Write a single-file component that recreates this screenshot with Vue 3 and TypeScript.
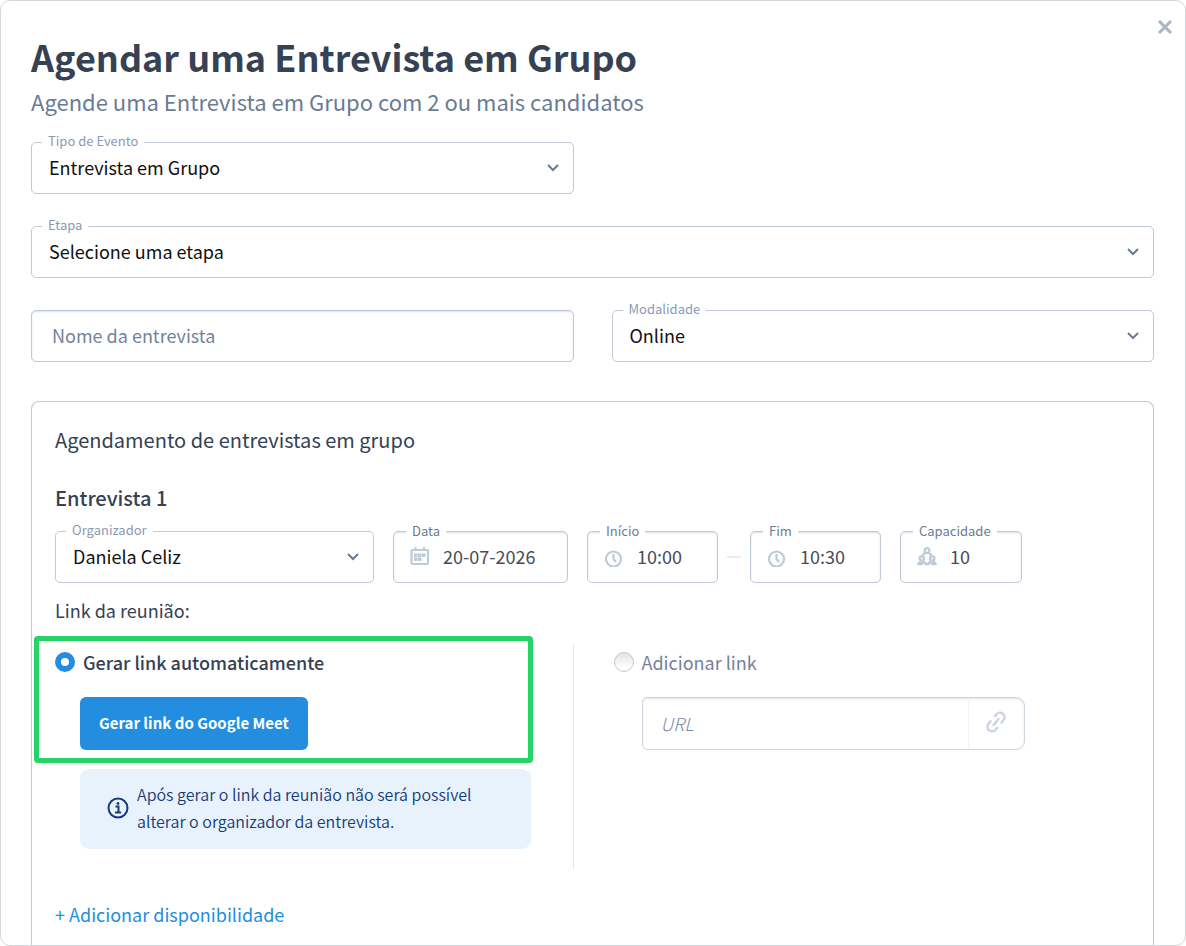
<script setup lang="ts">
import { ref } from 'vue'

const eventType = ref('Entrevista em Grupo')
const stage = ref('Selecione uma etapa')
const interviewName = ref('')
const modality = ref('Online')
const organizer = ref('Daniela Celiz')
const date = ref('20-07-2026')
const startTime = ref('10:00')
const endTime = ref('10:30')
const capacity = ref('10')
const linkMode = ref<'auto' | 'manual'>('auto')
const url = ref('')
</script>

<template>
  <main class="dialog">
    <button class="close" type="button" aria-label="Fechar">
      <svg width="18" height="18" viewBox="0 0 18 18"><path d="M3 3 15 15M15 3 3 15" /></svg>
    </button>

    <header class="header">
      <h1>Agendar uma Entrevista em Grupo</h1>
      <p>Agende uma Entrevista em Grupo com 2 ou mais candidatos</p>
    </header>

    <form class="form" @submit.prevent>
      <div class="fields">
        <div class="field">
          <label for="type">Tipo de Evento</label>
          <select id="type" v-model="eventType"><option>Entrevista em Grupo</option></select>
          <svg class="chevron" width="12" height="8" viewBox="0 0 12 8"><path d="M1 1 6 6 11 1" /></svg>
        </div>
        <div class="field wide">
          <label for="stage">Etapa</label>
          <select id="stage" v-model="stage"><option>Selecione uma etapa</option></select>
          <svg class="chevron" width="12" height="8" viewBox="0 0 12 8"><path d="M1 1 6 6 11 1" /></svg>
        </div>
        <div class="field inset">
          <input id="name" v-model="interviewName" type="text" aria-label="Nome da entrevista" placeholder="Nome da entrevista" />
        </div>
        <div class="field">
          <label for="modality">Modalidade</label>
          <select id="modality" v-model="modality"><option>Online</option></select>
          <svg class="chevron" width="12" height="8" viewBox="0 0 12 8"><path d="M1 1 6 6 11 1" /></svg>
        </div>
      </div>

      <section class="panel">
        <h2>Agendamento de entrevistas em grupo</h2>
        <h3>Entrevista 1</h3>

        <div class="slots">
          <div class="field organizer">
            <label for="organizer">Organizador</label>
            <select id="organizer" v-model="organizer"><option>Daniela Celiz</option></select>
            <svg class="chevron" width="12" height="8" viewBox="0 0 12 8"><path d="M1 1 6 6 11 1" /></svg>
          </div>
          <div class="field inset slot date">
            <label for="date">Data</label>
            <svg class="icon" width="20" height="20" viewBox="0 0 20 20">
              <rect class="line" x="1.500" y="3" width="16.500" height="14" rx="1" />
              <path class="solid" d="M4.500 0h2v4h-2zM13 0h2v4h-2zM4 6.500h3.500V10H4zM8 6.500h3.500V10H8zM12 6.500h3.500V10H12zM4 10.500h3.500V14H4zM8 10.500h3.500V14H8z" />
            </svg>
            <input id="date" v-model="date" type="text" />
          </div>
          <div class="field inset slot time">
            <label for="start">Início</label>
            <svg class="icon" width="20" height="20" viewBox="0 0 20 20">
              <circle class="line" cx="9.500" cy="12" r="7.500" /><path class="line" d="M9.500 7v5l2.500 3" />
            </svg>
            <input id="start" v-model="startTime" type="text" />
          </div>
          <span class="dash"></span>
          <div class="field inset slot time">
            <label for="end">Fim</label>
            <svg class="icon" width="20" height="20" viewBox="0 0 20 20">
              <circle class="line" cx="9.500" cy="12" r="7.500" /><path class="line" d="M9.500 7v5l2.500 3" />
            </svg>
            <input id="end" v-model="endTime" type="text" />
          </div>
          <div class="field inset slot capacity">
            <label for="capacity">Capacidade</label>
            <svg class="icon" width="20" height="20" viewBox="0 0 20 20">
              <g class="line">
                <circle cx="10" cy="3.500" r="2.400" /><circle cx="4.800" cy="11.500" r="2.200" /><circle cx="15.200" cy="11.500" r="2.200" />
                <path d="M5.200 8.800C5.700 7.700 6.800 6.800 8.300 5.800M14.800 8.800C14.300 7.700 13.200 6.800 11.700 5.800" />
              </g>
              <path class="solid" d="M0 18.200c.3-2 1.300-3.500 2.800-4.200l2 1.300 2-1.300c1.500.4 2.500 1.200 3.200 2.400.7-1.200 1.700-2 3.200-2.400l2 1.300 2-1.300c1.500.7 2.500 2.200 2.800 4.200h-5l-1.600-1.700-1.500 1.700H8.100l-1.500-1.700L5 18.200z" />
            </svg>
            <input id="capacity" v-model="capacity" type="text" />
          </div>
        </div>

        <p class="link-title">Link da reunião:</p>

        <div class="options">
          <div class="option automatic">
            <div class="highlight">
              <label class="radio"><input v-model="linkMode" type="radio" name="link" value="auto" /><span>Gerar link automaticamente</span></label>
              <button class="primary" type="button">Gerar link do Google Meet</button>
            </div>
            <div class="notice">
              <svg width="22" height="22" viewBox="0 0 22 22">
                <circle cx="11" cy="11" r="9.500" /><path d="M8.500 9.500h3v6M8 15.500h6" /><circle class="dot" cx="11" cy="6.500" r="1.400" />
              </svg>
              <p>Após gerar o link da reunião não será possível alterar o organizador da entrevista.</p>
            </div>
          </div>
          <div class="option manual">
            <label class="radio"><input v-model="linkMode" type="radio" name="link" value="manual" /><span>Adicionar link</span></label>
            <div class="url">
              <input v-model="url" type="text" aria-label="URL" placeholder="URL" />
              <span class="addon">
                <svg width="24" height="24" viewBox="0 0 24 24">
                  <path d="M11 6 12.800 3.900a4.600 4.600 0 0 1 6.900 6L17.500 12.700M13 18 11.200 20.100a4.600 4.600 0 0 1-6.900-6L6.500 11.300M9.500 15 14.500 9" />
                </svg>
              </span>
            </div>
          </div>
        </div>

        <button class="add" type="button">+ Adicionar disponibilidade</button>
      </section>
    </form>
  </main>
</template>

<style>
body {
  background: #fff;
}
</style>

<style scoped>
* {
  box-sizing: border-box;
}

.dialog {
  position: relative;
  display: flex;
  flex-direction: column;
  min-height: 100vh;
  padding: 32px 31px 0 30px;
  border: 1px solid #d5d7d9;
  border-radius: 10px;
  background: #fff;
  color: #364154;
  font-family: "Noto Sans CJK SC", "Noto Sans CJK JP", sans-serif;
  font-size: 18px;
  line-height: 26px;
}

h1, h2, h3, p {
  margin: 0;
}

button, input, select {
  font: inherit;
}

svg {
  fill: none;
}

.close {
  position: absolute;
  top: 17px;
  right: 11px;
  display: flex;
  padding: 0;
  border: 0;
  background: none;
}

.close path {
  stroke: #acb5c3;
  stroke-width: 3;
}

h1 {
  font-size: 36px;
  line-height: 46px;
}

.header p {
  color: #6b7b93;
  font-size: 22px;
  line-height: 44px;
}

.form {
  display: flex;
  flex: 1;
  flex-direction: column;
  padding-top: 19px;
}

.fields {
  display: grid;
  grid-template-columns: 1fr 1fr;
  gap: 32px 38px;
}

.wide {
  grid-column: 1 / -1;
}

.field {
  position: relative;
  display: flex;
  height: 52px;
  border: 1px solid #c0c9d6;
  border-radius: 5px;
}

.inset, .url {
  box-shadow: inset 0 1px 2px #dde1e8;
}

.field label {
  position: absolute;
  top: -12px;
  left: 10px;
  padding: 0 6px;
  background: #fff;
  color: #8a9ab3;
  font-size: 13px;
  line-height: 20px;
}

.field select, .field input {
  width: 100%;
  min-width: 0;
  padding: 0 40px 2px 17px;
  border: 0;
  outline: 0;
  background: none;
  color: #111;
  appearance: none;
}

.field input {
  padding: 0 0 2px 20px;
  color: #464d59;
}

.field input::placeholder {
  color: #74829a;
  opacity: 1;
}

.chevron {
  position: absolute;
  top: 21px;
  right: 14px;
  pointer-events: none;
}

.chevron path {
  stroke: #6b7b93;
  stroke-width: 2;
}

.panel {
  flex: 1;
  margin-top: 39px;
  padding: 25px 23px 16px;
  border: 1px solid #c0c9d6;
  border-bottom: 0;
  border-radius: 8px 8px 0 0;
}

h2 {
  font-size: 20px;
  font-weight: 400;
}

h3 {
  margin-top: 32px;
  font-size: 20px;
  font-weight: 500;
}

.slots {
  display: flex;
  align-items: center;
  gap: 19px;
  margin-top: 20px;
}

.organizer {
  width: 319px;
}

.slot {
  align-items: center;
  padding-left: 16px;
}

.slot label {
  top: -11px;
  left: 12px;
  color: #6b7b93;
}

.field.slot input {
  padding-left: 13px;
}

.icon {
  flex: none;
}

.line {
  stroke: #c0c9d6;
  stroke-width: 2.2;
}

.solid {
  fill: #c0c9d6;
}

.date {
  width: 175px;
}

.time {
  width: 131px;
}

.capacity {
  width: 122px;
}

.dash {
  width: 14px;
  height: 2px;
  margin: 0 -10px;
  background: #e8ecf0;
}

.link-title {
  margin-top: 14px;
}

.options {
  display: grid;
  grid-template-columns: 519fr 557fr;
  margin-top: 22px;
}

.automatic {
  padding-bottom: 20px;
  border-right: 1px solid #e4e8ec;
}

.highlight {
  margin: -9px 40px 0 -21px;
  padding: 8px 0 8px 16px;
  border: 5px solid #25d366;
  border-radius: 4px;
}

.radio {
  display: flex;
  align-items: center;
  gap: 8px;
}

.radio input {
  width: 20px;
  height: 20px;
  margin: 0;
  border: 1px solid #c0c9d6;
  border-radius: 50%;
  background: linear-gradient(#e0e2e4, #fff 80%);
  appearance: none;
}

.radio input:checked {
  border: 6px solid #238ee0;
  background: #fff;
}

.automatic .radio {
  font-weight: 500;
}

.primary {
  height: 53px;
  margin: 22px 0 0 25px;
  padding: 0 19px 2px;
  border: 0;
  border-radius: 6px;
  background: #238ee0;
  color: #fff;
  font-size: 15px;
  font-weight: 700;
}

.notice {
  display: flex;
  align-items: center;
  gap: 8px;
  margin: 6px 42px 0 25px;
  padding: 12px 50px 14px 27px;
  border-radius: 9px;
  background: #e8f2fc;
  color: #163a7a;
  font-size: 16px;
  font-weight: 350;
  line-height: 27px;
}

.notice svg {
  flex: none;
  stroke: #163a7a;
  stroke-width: 2;
}

.notice .dot {
  fill: #163a7a;
  stroke: none;
}

.manual {
  padding: 4px 0 0 40px;
  color: #74829a;
}

.url {
  display: flex;
  max-width: 383px;
  height: 53px;
  margin: 22px 0 0 28px;
  border: 1px solid #cdd5df;
  border-radius: 5px 9px 9px 5px;
}

.url input {
  flex: 1;
  min-width: 0;
  padding: 0 19px 2px 18px;
  border: 0;
  outline: 0;
  background: none;
  font-weight: 300;
}

.url input::placeholder {
  color: #7c8ca6;
  font-style: italic;
}

.addon {
  display: flex;
  align-items: center;
  justify-content: center;
  width: 56px;
  padding-bottom: 3px;
  border-left: 1px solid #f2f4f6;
}

.addon path {
  stroke: #ccd3de;
  stroke-width: 2.4;
  stroke-linecap: round;
}

.add {
  margin-top: 32px;
  padding: 0;
  border: 0;
  background: none;
  color: #238ee0;
}
</style>
